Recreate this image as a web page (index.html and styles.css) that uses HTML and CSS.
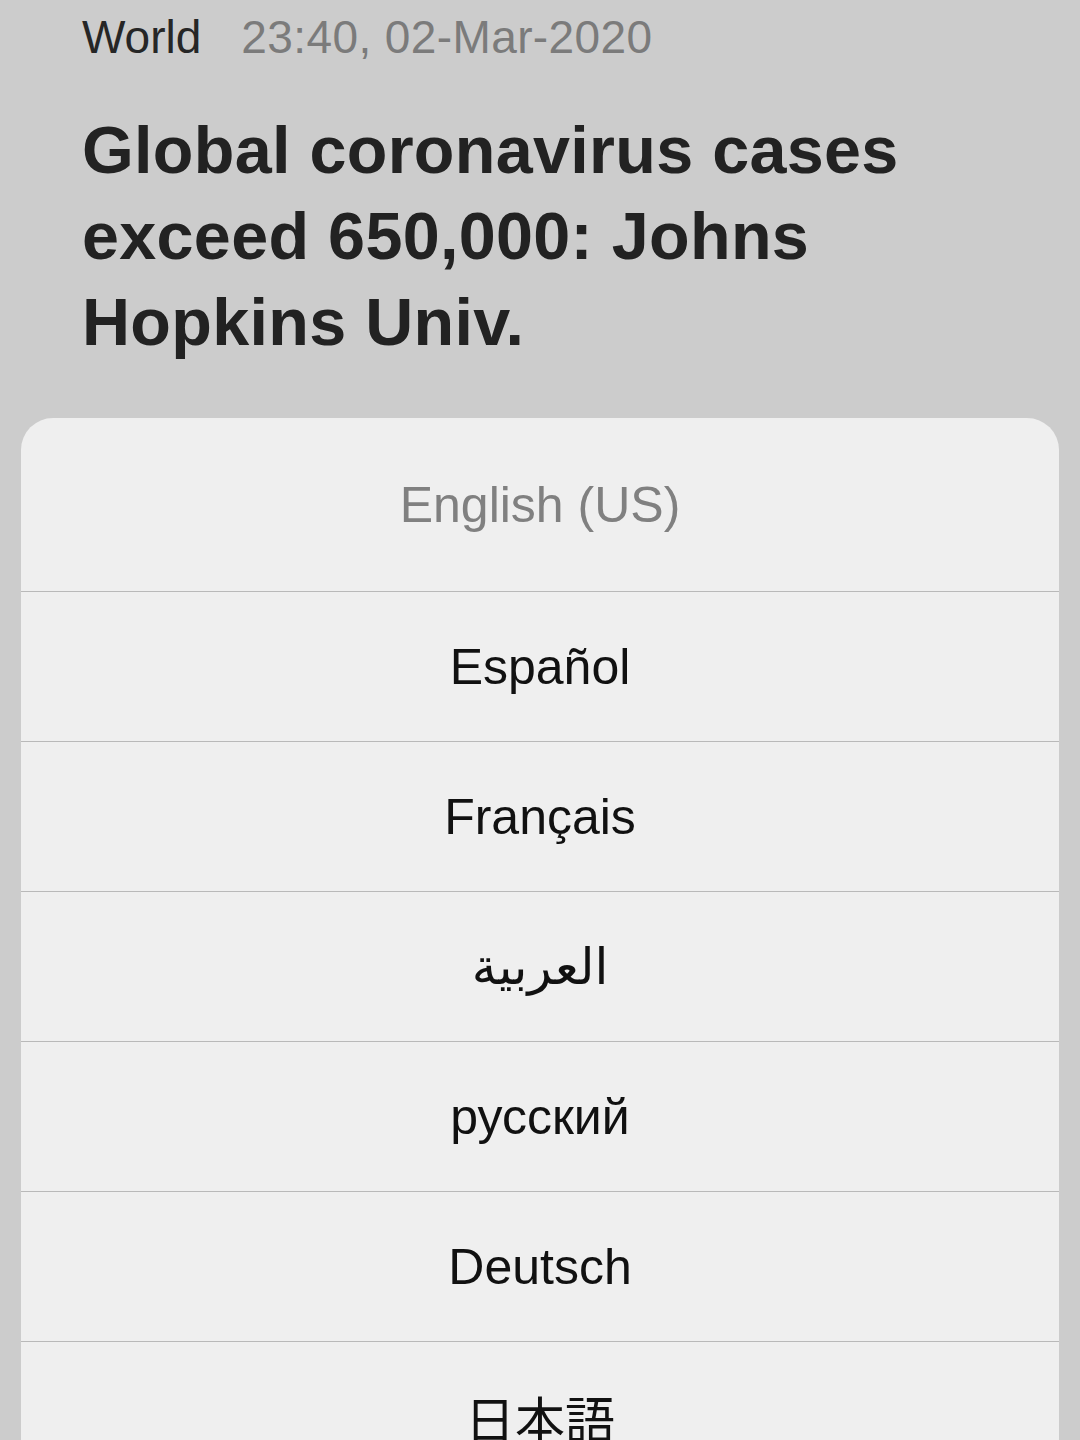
FILE: index.html
```html
<!DOCTYPE html>
<html lang="en">
  <head>
    <meta charset="UTF-8" />
    <meta name="viewport" content="width=device-width, initial-scale=1.0" />
    <title>Language picker</title>
    <link rel="stylesheet" href="styles.css">
  </head>
  <body>
    <div class="article">
      <div class="meta">
        <span class="section">World</span>
        <span class="date">23:40, 02-Mar-2020</span>
      </div>
      <h1>Global coronavirus cases exceed 650,000: Johns Hopkins Univ.</h1>
    </div>

    <div class="sheet">
      <div class="option current">English (US)</div>
      <div class="option">Español</div>
      <div class="option">Français</div>
      <div class="option arabic" lang="ar" dir="rtl">العربية</div>
      <div class="option" lang="ru">русский</div>
      <div class="option">Deutsch</div>
      <div class="option cjk" lang="ja">日本語</div>
    </div>
  </body>
</html>
```

FILE: styles.css
```css
html,
body {
  margin: 0;
  height: 100%;
}
body {
  display: flex;
  flex-direction: column;
  font-family: "Liberation Sans", Arial, sans-serif;
  background: #cccccc;
  overflow: hidden;
}
.article {
  padding: 0 82px;
}
.meta {
  display: flex;
  gap: 40px;
  padding-top: 12px;
  font-size: 46px;
  line-height: 50px;
}
.section {
  color: #262626;
}
.date {
  color: #7b7b7b;
  letter-spacing: 0.4px;
}
h1 {
  margin: 45px 0 0;
  font-size: 66.5px;
  line-height: 86px;
  font-weight: bold;
  color: #222222;
  letter-spacing: 0.3px;
}
/* the sheet fills the rest of the screen; the last row is cut by the edge */
.sheet {
  flex: 1;
  min-height: 0;
  margin: 53px 21px 0;
  background: #efefef;
  border-radius: 32px 32px 0 0;
  overflow: hidden;
}
.option {
  height: 149px;
  display: flex;
  align-items: center;
  justify-content: center;
  border-bottom: 1px solid #b9b9b9;
  font-size: 50px;
  color: #111111;
}
.option.current {
  height: 173px;
  color: #808080;
}
.option.arabic {
  font-family: "DejaVu Sans", sans-serif;
}
.option.cjk {
  font-family: "Noto Sans CJK JP", sans-serif;
}
```
